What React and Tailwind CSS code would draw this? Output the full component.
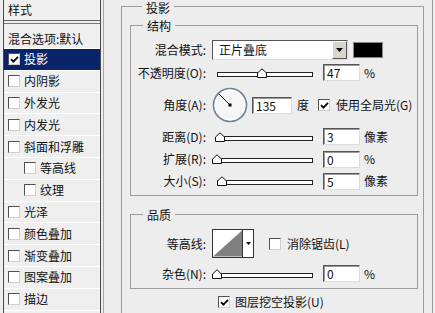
import React from "react";

const styles = [
  { label: "投影", checked: true, selected: true },
  { label: "内阴影" },
  { label: "外发光" },
  { label: "内发光" },
  { label: "斜面和浮雕" },
  { label: "等高线", indent: true },
  { label: "纹理", indent: true },
  { label: "光泽" },
  { label: "颜色叠加" },
  { label: "渐变叠加" },
  { label: "图案叠加" },
  { label: "描边" },
];

const CheckBox = ({ checked }) => (
  <span className="w-[12px] h-[12px] shrink-0 bg-white border border-t-[#505050] border-l-[#505050] border-r-[#cfcfcf] border-b-[#cfcfcf] flex items-center justify-center">
    {checked && (
      <svg width="9" height="9" viewBox="0 0 9 9">
        <path d="M1 4.2 L3.4 6.6 L8 1.8" fill="none" stroke="#000" strokeWidth="1.8" />
      </svg>
    )}
  </span>
);

const Slider = ({ pos, width = 101 }) => (
  <div className="relative h-[10px]" style={{ width }}>
    <div className="absolute left-[5px] right-0 bottom-[1px] h-[5px] bg-white border border-[#222]" />
    <svg
      className="absolute bottom-0"
      style={{ left: pos - 4.5 }}
      width="10"
      height="10"
      viewBox="0 0 10 10"
    >
      <path d="M0.5 9.5 V5 L5 0.8 L9.5 5 V9.5 Z" fill="#fff" stroke="#111" />
    </svg>
  </div>
);

const NumBox = ({ value, w = "w-[37px]" }) => (
  <div
    className={`${w} h-[17px] bg-white border border-t-[#555] border-l-[#555] border-r-[#dcdcdc] border-b-[#dcdcdc] shadow-[inset_1px_1px_0_#9a9a9a] pl-[3px] text-[12px] leading-[15px]`}
  >
    {value}
  </div>
);

const Row = ({ label, h, className = "", children }) => (
  <div className={`flex items-center ${className}`} style={{ height: h }}>
    <div className="w-[76px] text-right pr-[1px] whitespace-nowrap">{label}</div>
    <div className="ml-[5px] flex items-center">{children}</div>
  </div>
);

// inner legends are 16px tall, so the group border sits 8px below their top
const Legend = ({ children, className = "pt-[2px] leading-[14px]" }) => (
  <legend className={`ml-[12px] px-[4px] ${className}`}>{children}</legend>
);

export default function App() {
  return (
    <div className="w-[435px] h-[313px] bg-[#ededed] flex overflow-hidden text-[12px] text-[#111] font-['Noto_Sans_CJK_SC',sans-serif]">
      {/* Style list */}
      <div className="w-[104px] h-full pl-[3px] pr-[2px] border-r border-[#a8a8a8] flex">
        <div className="flex-1 h-full border-l border-r border-[#4a4a4a] bg-[#efefef]">
          <div className="h-[21px] pl-[4px] flex items-center border-b border-[#666]">样式</div>
          <div className="h-[3px] border-b border-[#777]" />
          <div className="h-[25px] pl-[4px] pt-[8px] leading-[14px] border-b border-white whitespace-nowrap">
            混合选项:默认
          </div>
          {styles.map((s) => (
            <div
              key={s.label}
              className={`h-[21.8px] flex items-center gap-[4px] border-b border-white whitespace-nowrap ${
                s.indent ? "pl-[20px]" : "pl-[4px]"
              } ${s.selected ? "bg-[#0a246a] text-white" : ""}`}
            >
              <CheckBox checked={s.checked} />
              <span>{s.label}</span>
            </div>
          ))}
        </div>
      </div>

      {/* Settings */}
      <div className="w-[329px] h-full border-r border-[#9a9a9a]">
        <fieldset className="ml-[17px] w-[303px] h-[340px] border border-[#9c9c9c] pl-[8px] pr-[5px] pt-[5px]">
          <Legend className="leading-[12px]">
            <span className="relative top-[2px]">投影</span>
          </Legend>

          <fieldset className="w-[288px] border border-[#9c9c9c] pt-[7px] pb-[3px]">
            <Legend>结构</Legend>
            <Row label="混合模式:" h={20}>
              <div className="w-[136px] h-[20px] bg-white border border-t-[#555] border-l-[#555] border-r-[#dcdcdc] border-b-[#dcdcdc] flex items-center">
                <span className="flex-1 pl-[6px] leading-[14px]">正片叠底</span>
                <span className="w-[15px] h-[18px] bg-[#d8d5cc] border border-t-white border-l-white border-r-[#555] border-b-[#555] flex items-center justify-center">
                  <svg width="7" height="4" viewBox="0 0 7 4">
                    <path d="M0 0 H7 L3.5 4 Z" fill="#000" />
                  </svg>
                </span>
              </div>
              <div className="ml-[5px] w-[30px] h-[16px] bg-black border border-[#888]" />
            </Row>
            <Row label="不透明度(O):" h={25}>
              <Slider pos={49} />
              <div className="ml-[10px]">
                <NumBox value="47" />
              </div>
              <span className="ml-[4px]">%</span>
            </Row>
            <Row label="角度(A):" h={40}>
              <svg width="36" height="36" viewBox="0 0 36 36">
                <circle cx="18" cy="18" r="16.5" fill="#f5f5f5" stroke="#6f7f9a" strokeWidth="1.6" />
                <circle cx="18" cy="18" r="15" fill="none" stroke="#fff" strokeWidth="1" />
                <line x1="18" y1="18" x2="6.6" y2="6.6" stroke="#111" strokeWidth="1" />
                <rect x="16.5" y="16.5" width="3" height="3" fill="#000" />
              </svg>
              <div className="ml-[4px]">
                <NumBox value="135" w="w-[40px]" />
              </div>
              <span className="ml-[5px]">度</span>
              <span className="ml-[9px]">
                <CheckBox checked />
              </span>
              <span className="ml-[6px] whitespace-nowrap">使用全局光(G)</span>
            </Row>
            <Row label="距离(D):" h={23}>
              <Slider pos={7.5} />
              <div className="ml-[10px]">
                <NumBox value="3" />
              </div>
              <span className="ml-[4px]">像素</span>
            </Row>
            <Row label="扩展(R):" h={22}>
              <Slider pos={4} />
              <div className="ml-[10px]">
                <NumBox value="0" />
              </div>
              <span className="ml-[4px]">%</span>
            </Row>
            <Row label="大小(S):" h={22}>
              <Slider pos={9.5} />
              <div className="ml-[10px]">
                <NumBox value="5" />
              </div>
              <span className="ml-[4px]">像素</span>
            </Row>
          </fieldset>

          <fieldset className="w-[288px] mt-[10px] border border-[#9c9c9c] pt-[7px] pb-[3px]">
            <Legend>品质</Legend>
            <Row label="等高线:" h={29}>
              <div className="w-[42px] h-[29px] border border-[#333] bg-white flex">
                <svg width="30" height="27" viewBox="0 0 30 27" className="border-r border-[#333]">
                  <path d="M0 27 L30 0 V27 Z" fill="#808080" />
                </svg>
                <div className="flex-1 flex items-center justify-center">
                  <svg width="5" height="3" viewBox="0 0 5 3">
                    <path d="M0 0 H5 L2.5 3 Z" fill="#000" />
                  </svg>
                </div>
              </div>
              <span className="ml-[15px]">
                <CheckBox />
              </span>
              <span className="ml-[6px] whitespace-nowrap">消除锯齿(L)</span>
            </Row>
            <Row label="杂色(N):" h={23} className="mt-[4px]">
              <Slider pos={4.5} />
              <div className="ml-[10px]">
                <NumBox value="0" />
              </div>
              <span className="ml-[4px]">%</span>
            </Row>
          </fieldset>

          <div className="h-[20px] mt-[3px] pl-[88px] flex items-center gap-[5px]">
            <CheckBox checked />
            <span className="whitespace-nowrap">图层挖空投影(U)</span>
          </div>
        </fieldset>
      </div>
    </div>
  );
}
